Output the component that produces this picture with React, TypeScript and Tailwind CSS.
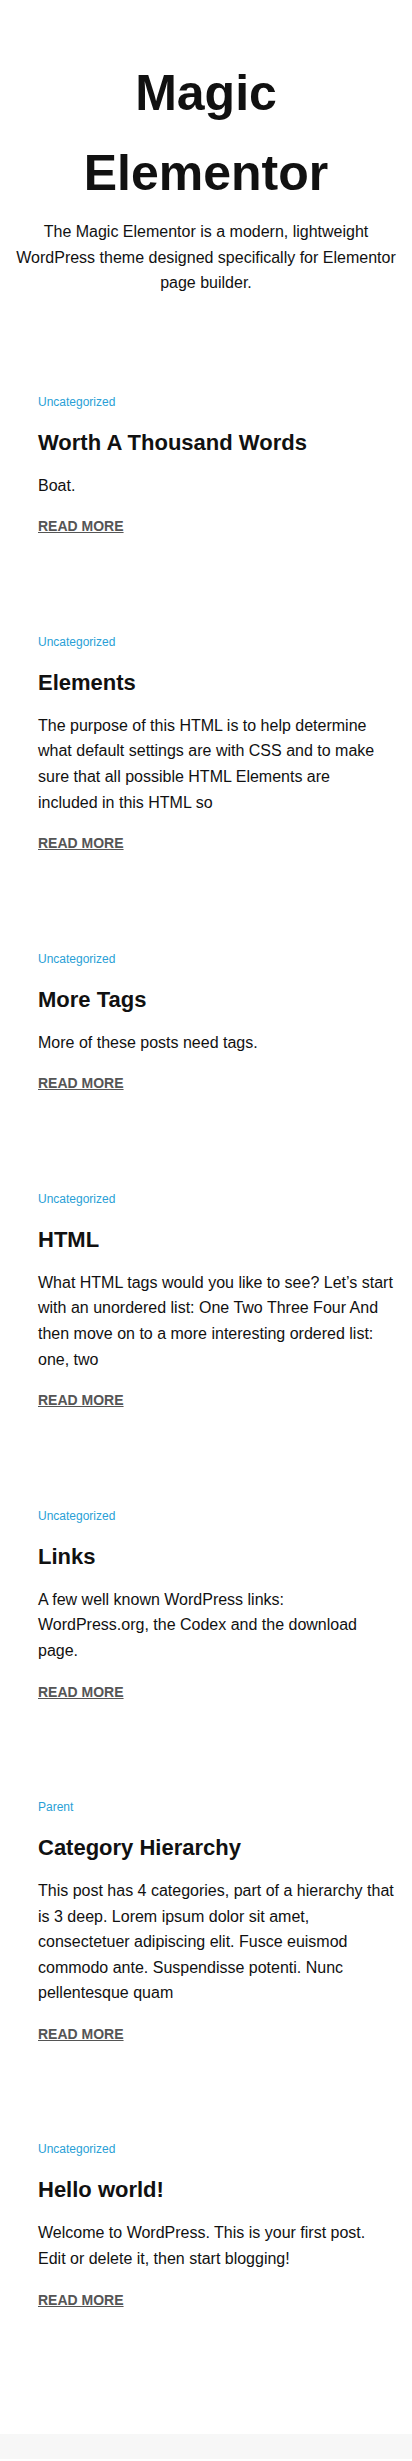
const posts = [
  {
    category: 'Uncategorized',
    title: 'Worth A Thousand Words',
    excerpt: 'Boat.',
  },
  {
    category: 'Uncategorized',
    title: 'Elements',
    excerpt:
      'The purpose of this HTML is to help determine what default settings are with CSS and to make sure that all possible HTML Elements are included in this HTML so',
  },
  {
    category: 'Uncategorized',
    title: 'More Tags',
    excerpt: 'More of these posts need tags.',
  },
  {
    category: 'Uncategorized',
    title: 'HTML',
    excerpt:
      'What HTML tags would you like to see? Let\u2019s start with an unordered list: One Two Three Four And then move on to a more interesting ordered list: one, two',
  },
  {
    category: 'Uncategorized',
    title: 'Links',
    excerpt: 'A few well known WordPress links: WordPress.org, the Codex and the download page.',
  },
  {
    category: 'Parent',
    title: 'Category Hierarchy',
    excerpt:
      'This post has 4 categories, part of a hierarchy that is 3 deep. Lorem ipsum dolor sit amet, consectetuer adipiscing elit. Fusce euismod commodo ante. Suspendisse potenti. Nunc pellentesque quam',
  },
  {
    category: 'Uncategorized',
    title: 'Hello world!',
    excerpt: 'Welcome to WordPress. This is your first post. Edit or delete it, then start blogging!',
  },
];

function PostCard({ category, title, excerpt }: { category: string; title: string; excerpt: string }) {
  return (
    <article className="pt-[47px] pb-[47.5px] pl-[38px] pr-[18px]">
      <a href="#" className="block text-[12px] leading-[19px] text-[#2a9fd6]">
        {category}
      </a>
      <h2 className="mt-4 text-[22px] leading-[29px] font-bold text-[#111]">
        <a href="#">{title}</a>
      </h2>
      <p className="mt-4 text-[16px] leading-[25.6px] text-[#111]">{excerpt}</p>
      <a
        href="#"
        className="mt-4 inline-block text-[14px] leading-[24px] font-bold uppercase text-[#555] underline"
      >
        Read More
      </a>
    </article>
  );
}

export default function App() {
  return (
    <div className="bg-white font-['Liberation_Sans',Arial,sans-serif] text-[#111]">
      {/* site header */}
      <header className="px-[10px] pt-[53px] pb-[50px] text-center">
        <h1 className="text-[50px] leading-[80px] font-bold text-[#111]">Magic Elementor</h1>
        <p className="mt-[6px] text-[16px] leading-[25.6px] text-[#111]">
          The Magic Elementor is a modern, lightweight WordPress theme designed specifically for Elementor page
          builder.
        </p>
      </header>

      <main>
        {posts.map((post) => (
          <PostCard key={post.title} {...post} />
        ))}
      </main>

      <div className="h-[75px]" />
      <footer className="h-[25px] bg-[#f7f7f7]" />
    </div>
  );
}
